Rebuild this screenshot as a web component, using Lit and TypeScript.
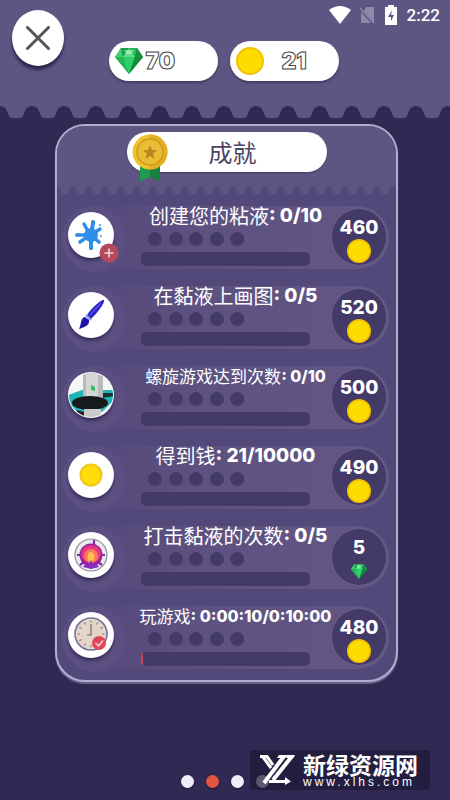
import { LitElement, html, svg, css, nothing, TemplateResult } from "lit";
import { customElement, property } from "lit/decorators.js";

type Currency = "coin" | "gem";

interface Achievement {
  icon: string;
  name: string;
  count: string;
  compact?: boolean;
  reward: number;
  currency: Currency;
  progress: number;
}

const achievements: Achievement[] = [
  { icon: "splat", name: "创建您的粘液", count: "0/10", reward: 460, currency: "coin", progress: 0 },
  { icon: "brush", name: "在黏液上画图", count: "0/5", reward: 520, currency: "coin", progress: 0 },
  { icon: "spiral", name: "螺旋游戏达到次数", count: "0/10", compact: true, reward: 500, currency: "coin", progress: 0 },
  { icon: "money", name: "得到钱", count: "21/10000", reward: 490, currency: "coin", progress: 0 },
  { icon: "punch", name: "打击黏液的次数", count: "0/5", reward: 5, currency: "gem", progress: 0 },
  { icon: "clock", name: "玩游戏", count: "0:00:10/0:10:00", compact: true, reward: 480, currency: "coin", progress: 1 },
];

const gem = html`<svg class="gem" viewBox="0 0 28 26" aria-hidden="true">
  <path d="M6 0H22L28 9L14 26L0 9Z" fill="#1fae4f" />
  <path d="M6 0L8 9H0Z" fill="#3fcf70" />
  <path d="M6 0H14L8 9Z" fill="#1c9a48" />
  <path d="M14 0L20 9H8Z" fill="#5be08a" />
  <path d="M14 0H22L20 9Z" fill="#27b85a" />
  <path d="M22 0L28 9H20Z" fill="#169043" />
  <path d="M0 9H8L14 26Z" fill="#23b557" />
  <path d="M8 9H20L14 26Z" fill="#2fd067" />
  <path d="M20 9H28L14 26Z" fill="#148a3e" />
  <path d="M9 2H19L17 6H11Z" fill="#b4f5c8" opacity=".6" />
</svg>`;

const coin = html`<svg class="coin" viewBox="0 0 28 28" aria-hidden="true">
  <circle cx="14" cy="14" r="14" fill="#f2c200" />
  <circle cx="14" cy="14" r="12" fill="#ffdc00" />
</svg>`;

const ticks = [0, 30, 60, 90, 120, 150, 180, 210, 240, 270, 300, 330];

const art: Record<string, TemplateResult> = {
  splat: svg`
    <g fill="#2f8fe8" stroke="#2f8fe8" stroke-linecap="round">
      <circle cx="23" cy="23" r="7" stroke="none" />
      <path d="M23 23L25 11" stroke-width="4" />
      <path d="M22 23L16 12" stroke-width="3.4" />
      <path d="M22 23L9 23" stroke-width="3.6" />
      <path d="M22 23L12 30" stroke-width="3.6" />
      <path d="M23 23L23 36" stroke-width="4" />
      <path d="M23 23L31 30" stroke-width="3.6" />
      <path d="M23 23L32 17" stroke-width="3.4" />
      <circle cx="25" cy="10" r="1.6" /><circle cx="9" cy="23" r="1.2" />
      <circle cx="23" cy="36" r="1.6" /><circle cx="33" cy="24" r="1" stroke="none" />
      <circle cx="32" cy="13" r="1" stroke="none" />
    </g>`,
  brush: svg`
    <path d="M36 8C34 7 24 15 19 23L23 27C29 21 37 11 36 8Z" fill="#2a22c8" />
    <path d="M33 11L22 23" stroke="#5a58e6" stroke-width="1.4" />
    <path d="M18 23L23 28" stroke="#8a94ea" stroke-width="2.4" />
    <path d="M17 25C12 26 14 31 11 37C17 35 22 33 21 28Z" fill="#1c17a8" />`,
  spiral: svg`
    <g clip-path="url(#disc)">
      <rect width="46" height="46" fill="#f4f5f5" />
      <path d="M0 23L14 18H46V28L34 40H10L0 32Z" fill="#1fb3b3" />
      <path d="M30 21H46V24L34 26Z" fill="#173234" />
      <rect x="15" y="0" width="20" height="26" fill="#b9bbbb" />
      <rect x="18" y="0" width="12" height="26" fill="#d4d6d4" />
      <path d="M23 13L27 15V19L23 18Z" fill="#31bd68" />
      <ellipse cx="22" cy="31" rx="18" ry="7" fill="#161a1c" />
      <rect x="16" y="37" width="17" height="9" fill="#c9caca" />
      <path d="M8 38L16 40V46H12Z" fill="#222" />
    </g>`,
  money: svg`
    <circle cx="23" cy="23" r="11.5" fill="#f2c51a" />
    <circle cx="23" cy="23" r="9.5" fill="#ffdc0a" />`,
  punch: svg`
    <circle cx="23" cy="23" r="16" fill="#e9e9ee" stroke="#8f8b98" stroke-width="1.2" />
    <path d="M26 8V14M9 23H14M37 23H32M12 33L16 30M34 33L30 30" stroke="#7e2bb8" stroke-width="2.2" />
    <circle cx="23" cy="23" r="11.5" fill="#9a1f9c" />
    <ellipse cx="23" cy="22" rx="10" ry="9" fill="#ea3580" />
    <ellipse cx="23" cy="24" rx="7" ry="7" fill="#f97a62" />
    <ellipse cx="23" cy="25" rx="3.5" ry="5" fill="#ffc04a" />
    <path d="M15 35L18 31L20 34L23 28L26 34L28 31L31 35L23 37Z" fill="#8a2cbd" />`,
  clock: svg`
    <circle cx="23" cy="22" r="16" fill="#e3d5c8" stroke="#77709c" stroke-width="1.6" />
    ${ticks.map((a) => svg`<path d="M23 8.5V11" stroke="#857c93" transform="rotate(${a} 23 22)" />`)}
    <path d="M23 12V23H19" fill="none" stroke="#6f6787" stroke-width="1.2" />
    <circle cx="31" cy="31" r="7" fill="#e0475b" />
    <path d="M27.5 31L30.5 34L35 28.5" fill="none" stroke="#ffc9cc" stroke-width="1.6" />`,
};

@customElement("reward-badge")
class RewardBadge extends LitElement {
  @property({ type: Number }) amount = 0;
  @property() currency: Currency = "coin";

  static styles = css`
    :host {
      display: flex;
      flex-direction: column;
      align-items: center;
      box-sizing: border-box;
      width: 54px;
      height: 56px;
      padding-top: 6px;
      border-radius: 50%;
      background: #443a68;
      box-shadow: 0 0 0 1px #665c8a;
      color: #fff;
      font: 800 19px/25px Inter, "Open Sans", sans-serif;
    }
    .amount {
      height: 24px;
    }
    .coin {
      flex: none;
      width: 24px;
      height: 24px;
    }
    .gem {
      width: 16px;
      height: 15px;
      margin-top: 5px;
    }
  `;

  render() {
    return html`<span class="amount">${this.amount}</span>${this.currency === "gem" ? gem : coin}`;
  }
}

@customElement("achievement-row")
class AchievementRow extends LitElement {
  @property({ attribute: false }) item!: Achievement;

  static styles = css`
    :host {
      display: grid;
      grid-template-columns: 64px 1fr auto;
      height: 63px;
      padding-right: 3px;
      border-radius: 32px;
      background: linear-gradient(90deg, #53487a 8%, #5c517f 40%, #625785 100%);
    }
    .blob {
      position: relative;
      box-sizing: border-box;
      height: 66px;
      padding: 6px;
      border-radius: 50%;
      background: #5a4f80;
    }
    .icon {
      display: block;
      width: 46px;
      height: 46px;
      border-radius: 50%;
      background: #fff;
      box-shadow: 0 3px 3px #3b315f;
    }
    .plus {
      position: absolute;
      left: 37px;
      top: 37px;
      width: 20px;
      height: 20px;
    }
    .body {
      display: flex;
      flex-direction: column;
      gap: 6px;
      padding: 0 2px 0 15px;
      min-width: 0;
    }
    .title {
      display: flex;
      justify-content: center;
      margin: 0;
      color: #fff;
      font: 400 20px/20px "Noto Sans CJK SC", sans-serif;
      white-space: pre;
    }
    .title b {
      font: 800 19px/20px Inter, "Open Sans", sans-serif;
    }
    .compact {
      font-size: 17px;
    }
    .compact b {
      font-size: 16px;
    }
    .levels {
      display: flex;
      justify-content: space-between;
      width: 96px;
      margin-left: 7px;
    }
    .level {
      width: 14px;
      height: 14px;
      border-radius: 50%;
      background: #443a68;
    }
    .bar {
      height: 14px;
      margin-right: 20px;
      border-radius: 5px;
      background: #443a68;
      overflow: hidden;
    }
    .fill {
      height: 100%;
      background: #d9435a;
    }
    reward-badge {
      margin-top: 3px;
    }
  `;

  render() {
    const a = this.item;
    return html`
      <div class="blob">
        <svg class="icon" viewBox="0 0 46 46" aria-hidden="true">
          <clipPath id="disc"><circle cx="23" cy="23" r="22" /></clipPath>
          ${art[a.icon]}
        </svg>
        ${a.icon === "splat"
          ? html`<svg class="plus" viewBox="0 0 20 20" aria-hidden="true">
              <circle cx="10" cy="10" r="9.5" fill="#b5485f" />
              <path d="M10 5.5V14.5M5.5 10H14.5" stroke="#f3d6dc" stroke-width="1.6" />
            </svg>`
          : nothing}
      </div>
      <div class="body">
        <h2 class="title ${a.compact ? "compact" : ""}" id="title">${a.name}<b>: ${a.count}</b></h2>
        <div class="levels">${[1, 2, 3, 4, 5].map(() => html`<span class="level"></span>`)}</div>
        <div class="bar" role="progressbar" aria-labelledby="title" aria-valuenow=${a.progress}>
          <div class="fill" style="width:${a.progress}%"></div>
        </div>
      </div>
      <reward-badge .amount=${a.reward} .currency=${a.currency}></reward-badge>
    `;
  }
}

@customElement("app-root")
class AppRoot extends LitElement {
  static styles = css`
    :host {
      display: flex;
      flex-direction: column;
      position: relative;
      min-height: 100vh;
      background: #312954;
      font-family: Inter, "Noto Sans CJK SC", sans-serif;
    }
    .top {
      display: grid;
      grid-template: 41px 65px 12px / auto 1fr;
      background: #5e5582;
    }
    .close {
      grid-area: 1 / 1 / 3 / 2;
      z-index: 1;
      width: 52px;
      height: 56px;
      margin: 10px 0 0 12px;
      padding: 0;
      border: 0;
      border-radius: 50%;
      background: #fff;
      box-shadow: 0 4px 3px #2f2750;
    }
    .close svg {
      display: block;
      width: 24px;
      height: 24px;
      margin: auto;
    }
    .status {
      grid-area: 1 / 2;
      display: flex;
      justify-content: flex-end;
      align-items: center;
      height: 30px;
      padding-right: 10px;
      color: #fff;
      font: 500 17px/30px Roboto, sans-serif;
    }
    .wifi {
      width: 22px;
      height: 20px;
      margin-right: 8px;
    }
    .sim {
      width: 16px;
      height: 18px;
      margin-right: 10px;
    }
    .battery {
      width: 12px;
      height: 20px;
      margin-right: 10px;
    }
    .wallet {
      grid-area: 2 / 1 / 3 / 3;
      display: flex;
      justify-content: center;
      gap: 12px;
      padding-right: 3px;
    }
    .pill {
      display: flex;
      align-items: center;
      box-sizing: border-box;
      width: 109px;
      height: 40px;
      padding-left: 6px;
      border-radius: 20px;
      background: #fff;
      box-shadow: 0 2px 2px #453c68;
      color: #fff;
      font: 900 23px/40px Inter, sans-serif;
      -webkit-text-stroke: 1px #444;
    }
    .pill svg {
      width: 28px;
      height: 28px;
    }
    .pill .gem {
      height: 26px;
      margin-right: 3px;
    }
    .pill .coin {
      margin-right: 18px;
    }
    .wave {
      grid-area: 3 / 1 / 4 / 3;
      display: block;
      width: 100%;
      height: 12px;
    }
    .panel {
      margin: 6px 52px 0 55px;
      border: 2px solid #b5add0;
      border-radius: 30px;
      background: #53487a;
      box-shadow: 0 2px 1px #6d6490;
      overflow: hidden;
    }
    .panel-head {
      padding-top: 6px;
      background: #5e5582;
    }
    .name {
      position: relative;
      width: 200px;
      margin: 0 auto;
      padding-left: 12px;
      box-sizing: border-box;
      border-radius: 20px;
      background: #fff;
      box-shadow: 0 1px 2px #453c68;
      color: #4c4566;
      font: 400 24px/40px "Noto Sans CJK SC", sans-serif;
      text-align: center;
    }
    .medal {
      position: absolute;
      left: 5px;
      top: 1px;
      width: 36px;
      height: 49px;
    }
    .panel-wave {
      display: block;
      width: 100%;
      height: 10px;
      margin-top: 13px;
    }
    .list {
      display: grid;
      gap: 17px;
      margin: 0;
      padding: 11px 7px 11px 5px;
      list-style: none;
    }
    .pager {
      display: flex;
      justify-content: center;
      gap: 12px;
      margin-top: auto;
      padding: 20px 0 12px;
    }
    .page {
      width: 13px;
      height: 13px;
      padding: 0;
      border: 0;
      border-radius: 50%;
      background: #f0eef6;
      box-shadow: 0 1px 2px #1d1738;
    }
    .current {
      background: #e2553f;
    }
    .mark {
      position: absolute;
      right: 20px;
      bottom: 10px;
      display: flex;
      align-items: center;
      box-sizing: border-box;
      width: 180px;
      height: 40px;
      padding-left: 10px;
      gap: 8px;
      border-radius: 2px;
      background: rgba(30, 24, 56, 0.7);
      color: #fff;
    }
    .mark svg {
      width: 35px;
      height: 30px;
    }
    .site {
      font: 700 23px/24px "Noto Sans CJK SC", sans-serif;
    }
    .url {
      font: 400 12px/12px "Liberation Sans", sans-serif;
      letter-spacing: 3px;
    }
  `;

  render() {
    return html`
      <header class="top">
        <button class="close" aria-label="关闭">
          <svg viewBox="0 0 24 24" aria-hidden="true">
            <path d="M1.5 1.5L22.5 22.5M22.5 1.5L1.5 22.5" stroke="#555" stroke-width="3" stroke-linecap="round" />
          </svg>
        </button>
        <div class="status">
          <svg class="wifi" viewBox="0 0 22 20" aria-hidden="true">
            <path d="M0 5Q11-3 22 5L11 19Z" fill="#fff" />
          </svg>
          <svg class="sim" viewBox="0 0 16 18" aria-hidden="true">
            <path d="M7 1H15V16L5 5ZM2 6L12 17H2Z" fill="#9088aa" />
            <path d="M1 2L15 17" stroke="#9088aa" stroke-width="1.5" />
          </svg>
          <svg class="battery" viewBox="0 0 12 20" aria-hidden="true">
            <path d="M3 0H9V2H12V20H0V2H3Z" fill="#fff" />
            <path d="M7 5L3 12H6V16L9 10H6Z" fill="#5e5582" />
          </svg>
          <time>2:22</time>
        </div>
        <div class="wallet">
          <div class="pill">${gem}<span>70</span></div>
          <div class="pill">${coin}<span>21</span></div>
        </div>
        <svg class="wave" aria-hidden="true">
          <pattern id="big" x="-16" width="32" height="12" patternUnits="userSpaceOnUse">
            <path d="M4 12C9 12 7 0 16 0C25 0 23 12 28 12Z" fill="#312954" />
          </pattern>
          <rect width="100%" height="12" fill="url(#big)" />
        </svg>
      </header>
      <main class="panel">
        <div class="panel-head">
          <div class="name" role="heading" aria-level="1">
            <svg class="medal" viewBox="0 0 36 49" aria-hidden="true">
              <path d="M8 30H18V44L13 46L8 49Z" fill="#1f9a50" />
              <path d="M18 30H28V49L23 46L18 44Z" fill="#15803f" />
              <circle cx="18" cy="19" r="17.5" fill="#eec22f" />
              <path d="M18 1.5A17.5 17.5 0 0 1 18 36.5Z" fill="#e3af24" />
              <circle cx="18" cy="19" r="13" fill="#e9bd35" stroke="#cf9a1d" stroke-width="1.5" />
              <path d="M18 12L20 17H25L21 20.5L22.5 26L18 23L13.5 26L15 20.5L11 17H16Z" fill="#b8861b" />
            </svg>
            成就
          </div>
          <svg class="panel-wave" aria-hidden="true">
            <pattern id="small" x="-8" width="16" height="10" patternUnits="userSpaceOnUse">
              <path d="M0 10C5 9 4 1 8 1C12 1 11 9 16 10Z" fill="#53487a" />
            </pattern>
            <rect width="100%" height="10" fill="url(#small)" />
          </svg>
        </div>
        <ul class="list">
          ${achievements.map((a) => html`<li><achievement-row .item=${a}></achievement-row></li>`)}
        </ul>
      </main>
      <nav class="pager" aria-label="页面">
        ${[1, 2, 3, 4].map(
          (n) => html`<button class="page ${n === 2 ? "current" : ""}" aria-label="${n}"></button>`
        )}
      </nav>
      <div class="mark">
        <svg viewBox="0 0 35 30" aria-hidden="true">
          <g fill="none" stroke="#fff">
            <path d="M0 1.5H7L13 10" stroke-width="3" />
            <path d="M3 2L11 13" stroke-width="3" />
            <path d="M25 0L4 28" stroke-width="4" />
            <path d="M33 0L13 25" stroke-width="4" />
            <path d="M9 26.500H28" stroke-width="3" />
          </g>
          <path d="M19 0H27L25 3H17ZM27 0H35L33 3H26ZM25 22L31 26.500L25 30Z" fill="#fff" />
        </svg>
        <div>
          <div class="site">新绿资源网</div>
          <div class="url">www.xlhs.com</div>
        </div>
      </div>
    `;
  }
}
